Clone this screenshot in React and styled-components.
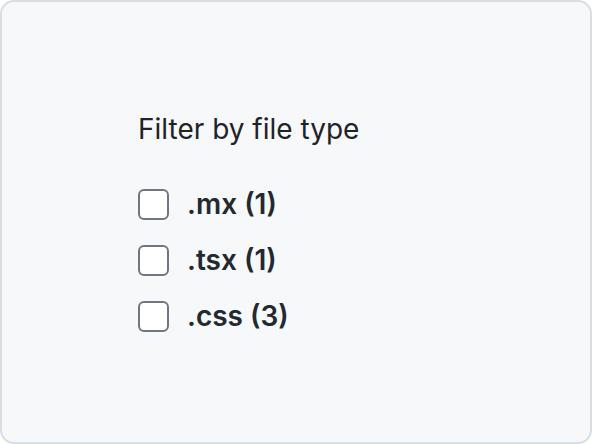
import React, { useState } from "react";
import styled, { createGlobalStyle } from "styled-components";

const GlobalStyle = createGlobalStyle`
  html, body {
    margin: 0;
    padding: 0;
    background: #ffffff;
  }
  * {
    box-sizing: border-box;
  }
`;

const fileTypes = [
  { ext: ".mx", count: 1 },
  { ext: ".tsx", count: 1 },
  { ext: ".css", count: 3 },
];

const App = () => {
  const [checked, setChecked] = useState({});

  const toggle = (ext) => setChecked((prev) => ({ ...prev, [ext]: !prev[ext] }));

  return (
    <>
      <GlobalStyle />
      <Card>
        <Panel>
          <Title>Filter by file type</Title>
          <List>
            {fileTypes.map((type) => (
              <Option key={type.ext}>
                <Box type="checkbox" checked={!!checked[type.ext]} onChange={() => toggle(type.ext)} />
                <Label>
                  {type.ext} ({type.count})
                </Label>
              </Option>
            ))}
          </List>
        </Panel>
      </Card>
    </>
  );
};

const Card = styled.div`
  width: 592px;
  height: 444px;
  display: flex;
  align-items: center;
  padding-left: 136px;
  background-color: #f6f8fa;
  border: 2px solid #d8dee4;
  border-radius: 14px;
  font-family: Inter, "Liberation Sans", sans-serif;
`;

const Panel = styled.div`
  display: flex;
  flex-direction: column;
`;

const Title = styled.h2`
  margin: 0 0 43px;
  font-size: 28px;
  font-weight: 400;
  line-height: 34px;
  color: #1f2328;
`;

const List = styled.div`
  display: flex;
  flex-direction: column;
  gap: 25px;
`;

const Option = styled.label`
  display: flex;
  align-items: center;
  gap: 18px;
  cursor: pointer;
`;

const Box = styled.input`
  appearance: none;
  margin: 0;
  width: 31px;
  height: 31px;
  background-color: #ffffff;
  border: 2px solid #6e7781;
  border-radius: 6px;
  cursor: pointer;

  &:checked {
    background-color: #0969da;
    border-color: #0969da;
  }
`;

const Label = styled.span`
  font-size: 28px;
  font-weight: 600;
  line-height: 31px;
  color: #24292f;
`;

export default App;
